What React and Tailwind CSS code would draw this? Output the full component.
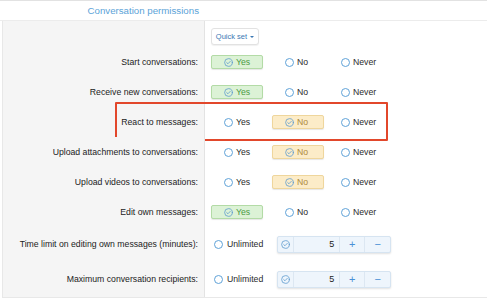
function CheckCircle({ className }) {
  return (
    <svg viewBox="0 0 10 10" className={className} fill="none" stroke="currentColor" strokeWidth="0.9" strokeLinecap="round" strokeLinejoin="round">
      <circle cx="5" cy="5" r="4.3" />
      <path d="M3 5.1 4.4 6.4 7 3.7" />
    </svg>
  )
}

function Radio() {
  return <span className="h-[9px] w-[9px] shrink-0 rounded-full border border-[#5fa2d8] bg-white" />
}

const tones = {
  green: 'border-[#b3dba6] bg-[#dcf2d6] text-[#4b9a45] shadow-[0_1px_1px_rgba(0,0,0,0.1)]',
  amber: 'border-[#efd69c] bg-[#fcecc8] text-[#ad8a3c] shadow-[0_1px_1px_rgba(0,0,0,0.1)]',
}

function Option({ text, selected, tone, className = '' }) {
  return (
    <label
      className={`flex h-[14px] items-center gap-[3px] rounded-[2px] border pl-[12px] ${
        selected ? tones[tone] : 'border-transparent text-[#2a2a2a]'
      } ${className}`}
    >
      {selected ? <CheckCircle className="h-[9px] w-[9px] shrink-0 text-[#5f9ccf]" /> : <Radio />}
      <span>{text}</span>
    </label>
  )
}

function Choices({ value }) {
  return (
    <div className="flex items-center">
      <Option text="Yes" selected={value === 'yes'} tone="green" className="w-[52px]" />
      <Option text="No" selected={value === 'no'} tone="amber" className="ml-[9px] w-[52px]" />
      <Option text="Never" selected={value === 'never'} tone="amber" className="ml-[4px] w-[60px]" />
    </div>
  )
}

function Spinner({ value }) {
  return (
    <div className="ml-[14px] flex h-[17px] w-[114px] items-stretch rounded-[2px] border border-[#d6e4f1] bg-[#eef5fc] shadow-[0_1px_2px_rgba(0,0,0,0.12)]">
      <div className="flex w-[16px] items-center justify-center border-r border-[#dce7f2]">
        <CheckCircle className="h-[9px] w-[9px] text-[#5f9ccf]" />
      </div>
      <div className="flex w-[45px] items-center justify-end pr-[5px] text-[9px] text-[#222]">{value}</div>
      <div className="flex w-[25px] items-center justify-center border-l border-[#dce7f2] text-[11px] text-[#4a90d6]">+</div>
      <div className="flex flex-1 items-center justify-center border-l border-[#dce7f2] text-[11px] text-[#4a90d6]">−</div>
    </div>
  )
}

function Row({ label, height, boxed, children }) {
  return (
    <div className={`relative flex ${height}`}>
      <div className="flex w-[202px] shrink-0 items-center justify-end border-r border-[#e3e3e3] bg-[#f5f5f5] pr-[6px] text-[#222]">
        {label}
      </div>
      <div className="flex items-center pl-[6px]">{children}</div>
      {boxed && (
        <div className="absolute left-[112px] top-[-5px] h-[39px] w-[273px] rounded-[1px] border-2 border-[#e2472b]" />
      )}
    </div>
  )
}

const rows = [
  { label: 'Start conversations:', value: 'yes' },
  { label: 'Receive new conversations:', value: 'yes' },
  { label: 'React to messages:', value: 'no', boxed: true },
  { label: 'Upload attachments to conversations:', value: 'no' },
  { label: 'Upload videos to conversations:', value: 'no' },
  { label: 'Edit own messages:', value: 'yes' },
]

function Unlimited({ value }) {
  return (
    <div className="flex items-center pl-[3px]">
      <span className="flex items-center gap-[4px] text-[#2a2a2a]">
        <Radio />
        Unlimited
      </span>
      <Spinner value={value} />
    </div>
  )
}

export default function App() {
  return (
    <div className="h-[300px] w-[487px] overflow-hidden border-t border-[#e2e2e2] bg-white font-['Liberation_Sans',Arial,sans-serif] text-[8.7px] leading-none">
      <div className="flex h-[20px] border-b border-[#ececec]">
        <div className="flex w-[205px] items-center justify-end pr-[6px] text-[9.7px] text-[#5ba3d8]">
          Conversation permissions
        </div>
      </div>

      <div className="ml-[2px] border-b border-l border-[#e8e8e8]">
        <div className="flex h-[26px]">
          <div className="w-[202px] shrink-0 border-r border-[#e3e3e3] bg-[#f5f5f5]" />
          <div className="pl-[6px] pt-[7px]">
            <button className="flex h-[17px] w-[48px] items-center justify-center gap-[3px] rounded-[3px] border border-[#e2e2e2] bg-white text-[7.5px] text-[#3b78b4] shadow-[0_1px_1px_rgba(0,0,0,0.06)]">
              Quick set
              <span className="h-0 w-0 border-x-[2px] border-t-[2.5px] border-x-transparent border-t-[#3b78b4]" />
            </button>
          </div>
        </div>

        {rows.map((r) => (
          <Row key={r.label} label={r.label} height="h-[30px]" boxed={r.boxed}>
            <Choices value={r.value} />
          </Row>
        ))}
        <Row label="Time limit on editing own messages (minutes):" height="h-[34px]">
          <Unlimited value="5" />
        </Row>
        <Row label="Maximum conversation recipients:" height="h-[36px]">
          <Unlimited value="5" />
        </Row>
      </div>
    </div>
  )
}
